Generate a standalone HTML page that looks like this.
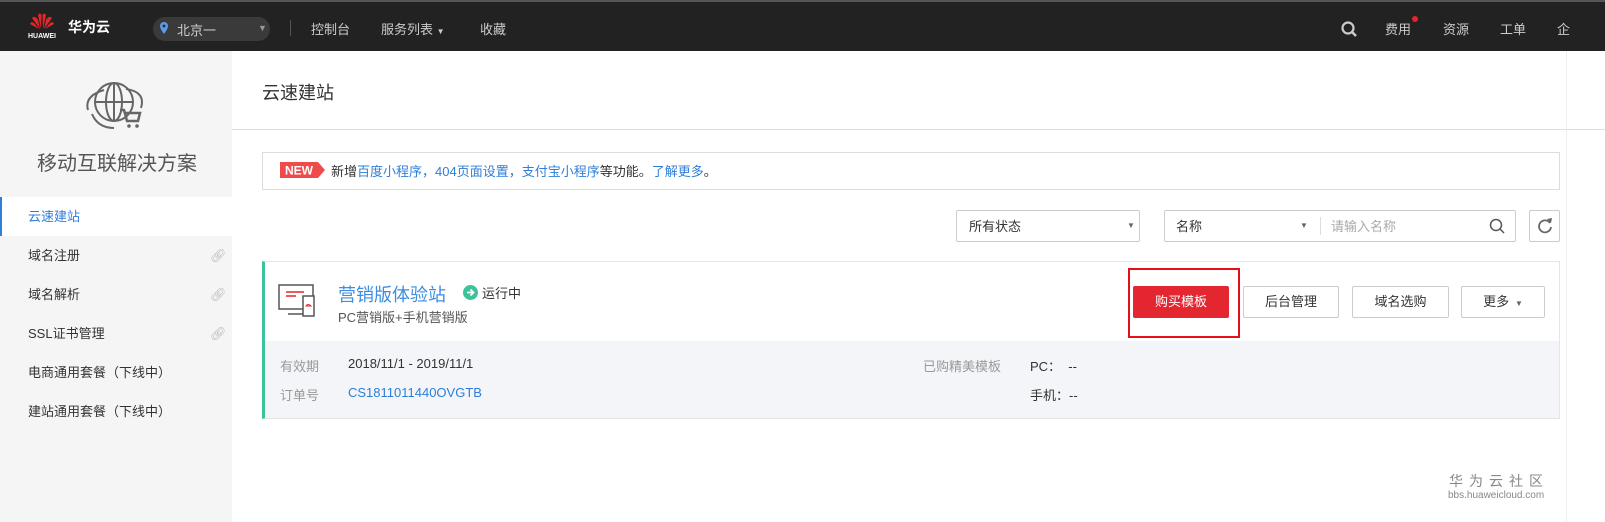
<!DOCTYPE html>
<html><head><meta charset="utf-8"><style>
*{margin:0;padding:0;box-sizing:border-box}
body{width:1605px;height:522px;overflow:hidden;background:#fff;font-family:"Liberation Sans","Noto Sans CJK SC",sans-serif;font-size:13px;color:#333;position:relative}
.abs{position:absolute}
.top{left:0;top:0;width:1605px;height:51px;background:#222;border-top:2px solid #555;color:#ccc;font-size:13px}
.side{left:0;top:51px;width:232px;height:471px;background:#f5f5f5}
.nav{position:absolute;left:0;width:232px;height:39px;line-height:39px;padding-left:28px;color:#333;font-size:13px}
.btn{position:absolute;top:286px;height:32px;line-height:30px;border:1px solid #ccc;background:#fff;text-align:center;font-size:13px;color:#333;border-radius:2px}
.link{color:#2f7ed8}
</style></head><body>
<div class="abs top">
  <svg class="abs" style="left:30px;top:10px" width="24" height="18" viewBox="0 0 24 18"><g fill="#e3262a"><path d="M11 17 L8 3 Q10 0 11.5 3Z"/><path d="M13 17 L16 3 Q14 0 12.5 3Z"/><path d="M10 17 L2 6 Q5 3 8 8Z"/><path d="M14 17 L22 6 Q19 3 16 8Z"/><path d="M9 17 L0 12 Q1 9 4 11Z"/><path d="M15 17 L24 12 Q23 9 20 11Z"/></g></svg>
  <div class="abs" style="left:28px;top:31px;font-size:7px;color:#fff;font-weight:bold">HUAWEI</div>
  <div class="abs" style="left:68px;top:15px;color:#fff;font-weight:bold;font-size:14px">华为云</div>
  <div class="abs" style="left:153px;top:15px;width:117px;height:24px;border-radius:12px;background:#3a3a3a"></div>
  <svg class="abs" style="left:160px;top:20px" width="8" height="12" viewBox="0 0 8 12"><path d="M4 0A4 4 0 0 0 0 4C0 7 4 12 4 12S8 7 8 4A4 4 0 0 0 4 0Z" fill="#5b9bea"/><circle cx="4" cy="4" r="1.5" fill="#333"/></svg>
  <div class="abs" style="left:177px;top:18px;color:#ccc">北京一</div>
  <div class="abs" style="left:258px;top:21px;color:#999;font-size:9px">▼</div>
  <div class="abs" style="left:290px;top:18px;width:1px;height:16px;background:#555"></div>
  <div class="abs" style="left:311px;top:17px">控制台</div>
  <div class="abs" style="left:381px;top:17px">服务列表 <span style="font-size:8px">▼</span></div>
  <div class="abs" style="left:480px;top:17px">收藏</div>
  <svg class="abs" style="left:1341px;top:19px" width="16" height="16" viewBox="0 0 16 16"><circle cx="7" cy="7" r="5.5" stroke="#ccc" stroke-width="2.2" fill="none"/><path d="M11 11L15 15" stroke="#ccc" stroke-width="2.5"/></svg>
  <div class="abs" style="left:1385px;top:17px">费用</div>
  <div class="abs" style="left:1412px;top:14px;width:6px;height:6px;border-radius:3px;background:#e3262a"></div>
  <div class="abs" style="left:1443px;top:17px">资源</div>
  <div class="abs" style="left:1500px;top:17px">工单</div>
  <div class="abs" style="left:1557px;top:17px">企</div>
</div>
<div class="abs side">
  <svg class="abs" style="left:84px;top:27px" width="62" height="60" viewBox="0 0 62 60"><g stroke="#666" stroke-width="2" fill="none"><circle cx="30" cy="24" r="19"/><ellipse cx="30" cy="24" rx="8" ry="19"/><path d="M11 24H49M30 5V43"/><path d="M4 32Q0 18 20 12M42 11Q62 14 57 30"/><path d="M8 36Q14 50 30 50"/></g><path d="M36 32h4l3 11h11l2-8h-15" stroke="#666" stroke-width="2.5" fill="none"/><circle cx="45" cy="48" r="1.8" fill="#666"/><circle cx="53" cy="48" r="1.8" fill="#666"/></svg>
  <div class="abs" style="left:37px;top:96px;font-size:20px;color:#555">移动互联解决方案</div>
  <div class="nav" style="top:146px;background:#fff;color:#2f7ed8;border-left:2px solid #2f7ed8;padding-left:26px">云速建站</div>
  <div class="nav" style="top:185px">域名注册<span class="abs" style="left:210px;color:#bbb">🔗︎</span></div>
  <div class="nav" style="top:224px">域名解析<span class="abs" style="left:210px;color:#bbb">🔗︎</span></div>
  <div class="nav" style="top:263px">SSL证书管理<span class="abs" style="left:210px;color:#bbb">🔗︎</span></div>
  <div class="nav" style="top:302px">电商通用套餐（下线中）</div>
  <div class="nav" style="top:341px">建站通用套餐（下线中）</div>
</div>
<div class="abs" style="left:262px;top:79px;font-size:18px;color:#333">云速建站</div>
<div class="abs" style="left:232px;top:129px;width:1373px;height:1px;background:#ddd"></div>
<div class="abs" style="left:262px;top:152px;width:1298px;height:38px;border:1px solid #ddd"></div>
<svg class="abs" style="left:280px;top:162px" width="45" height="16"><path d="M0 0H38L45 8L38 16H0Z" fill="#ef4b4b"/><text x="5" y="12.5" font-family="Liberation Sans" font-weight="bold" font-size="12" fill="#fff">NEW</text></svg>
<div class="abs" style="left:331px;top:161px">新增<span class="link">百度小程序，404页面设置，支付宝小程序</span>等功能。<span class="link">了解更多</span>。</div>
<div class="abs" style="left:956px;top:210px;width:184px;height:32px;border:1px solid #ccc;border-radius:2px"><span class="abs" style="left:12px;top:5px">所有状态</span><span class="abs" style="left:170px;top:10px;font-size:8px;color:#666">▼</span></div>
<div class="abs" style="left:1164px;top:210px;width:352px;height:32px;border:1px solid #ccc;border-radius:2px"><span class="abs" style="left:11px;top:5px">名称</span><span class="abs" style="left:135px;top:10px;font-size:8px;color:#666">▼</span><span class="abs" style="left:155px;top:6px;width:1px;height:18px;background:#ddd"></span><span class="abs" style="left:166px;top:5px;color:#aaa">请输入名称</span>
<svg class="abs" style="left:324px;top:7px" width="16" height="16"><circle cx="7" cy="7" r="5.5" stroke="#555" stroke-width="1.5" fill="none"/><path d="M11 11L15 15" stroke="#555" stroke-width="1.5"/></svg></div>
<div class="abs" style="left:1529px;top:210px;width:31px;height:32px;border:1px solid #ccc;border-radius:2px"><svg class="abs" style="left:7px;top:7px" width="16" height="16"><path d="M13 5A6 6 0 1 0 14 9" stroke="#666" stroke-width="1.8" fill="none"/><path d="M10 1L14 5L15 0Z" fill="#666"/></svg></div>
<div class="abs" style="left:262px;top:261px;width:1298px;height:158px;border:1px solid #e5e5e5;border-left:3px solid #3bc39b"></div>
<div class="abs" style="left:265px;top:341px;width:1294px;height:77px;background:#f3f5f8"></div>
<svg class="abs" style="left:278px;top:284px" width="44" height="36" viewBox="0 0 44 36"><rect x="1" y="1" width="34" height="24" fill="none" stroke="#555" stroke-width="1.5"/><path d="M8 8h18M8 12h10" stroke="#e3262a" stroke-width="1.5"/><path d="M10 30h16" stroke="#555" stroke-width="1.5"/><rect x="25" y="12" width="11" height="20" fill="#fff" stroke="#555" stroke-width="1.5"/><path d="M28 22q2-3 5 0z" stroke="#e3262a" fill="none"/></svg>
<div class="abs" style="left:338px;top:281px;font-size:18px;color:#3c8ee0">营销版体验站</div>
<svg class="abs" style="left:463px;top:285px" width="15" height="15"><circle cx="7.5" cy="7.5" r="7.5" fill="#3bc39b"/><path d="M4 7.5H10M7.5 4.5L10.5 7.5L7.5 10.5" stroke="#fff" stroke-width="1.8" fill="none"/></svg>
<div class="abs" style="left:482px;top:283px">运行中</div>
<div class="abs" style="left:338px;top:307px;color:#555">PC营销版+手机营销版</div>
<div class="abs" style="left:1128px;top:268px;width:112px;height:70px;border:2px solid #e3101a"></div>
<div class="btn" style="left:1133px;background:#e3262f;border-color:#e3262f;color:#fff;width:96px">购买模板</div>
<div class="btn" style="left:1243px;width:96px">后台管理</div>
<div class="btn" style="left:1352px;width:97px">域名选购</div>
<div class="btn" style="left:1461px;width:84px">更多 <span style="font-size:8px;color:#666">&nbsp;▼</span></div>
<div class="abs" style="left:280px;top:356px;color:#999">有效期</div>
<div class="abs" style="left:348px;top:356px">2018/11/1 - 2019/11/1</div>
<div class="abs" style="left:280px;top:385px;color:#999">订单号</div>
<div class="abs" style="left:348px;top:385px" ><span class="link">CS1811011440OVGTB</span></div>
<div class="abs" style="left:923px;top:356px;color:#999">已购精美模板</div>
<div class="abs" style="left:1030px;top:356px">PC：&nbsp; --</div>
<div class="abs" style="left:1030px;top:385px">手机：--</div>
<div class="abs" style="left:1566px;top:51px;width:1px;height:471px;background:#eee"></div>
<div class="abs" style="left:1449px;top:471px;font-size:14px;color:#888;letter-spacing:6px">华为云社区</div>
<div class="abs" style="left:1448px;top:490px;font-size:10px;color:#888">bbs.huaweicloud.com</div>
</body></html>
